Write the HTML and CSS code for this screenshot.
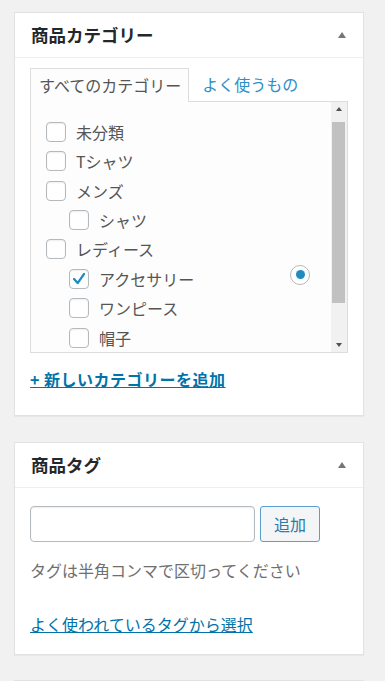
FILE: index.html
```html
<!DOCTYPE html>
<html lang="ja">
<head>
<meta charset="utf-8">
<title>商品カテゴリー</title>
<link rel="stylesheet" href="styles.css">
</head>
<body>
<div class="wrap">
  <section class="postbox">
    <div class="postbox-header">
      <h2>商品カテゴリー</h2>
      <span class="toggle"></span>
    </div>
    <div class="inside">
      <ul class="tabs">
        <li class="tab active">すべてのカテゴリー</li>
        <li class="tab">よく使うもの</li>
      </ul>
      <div class="tab-panel">
        <ul class="checklist">
          <li class="row"><span class="cb"></span><span>未分類</span></li>
          <li class="row"><span class="cb"></span><span>Tシャツ</span></li>
          <li class="row"><span class="cb"></span><span>メンズ</span></li>
          <li class="row child"><span class="cb"></span><span>シャツ</span></li>
          <li class="row"><span class="cb"></span><span>レディース</span></li>
          <li class="row child"><span class="cb checked"><svg viewBox="0 0 20 20" width="18" height="18"><polyline points="4.5,10 8.5,14.5 15.5,4.5" fill="none" stroke="#1e8cbe" stroke-width="2.6" stroke-linecap="round" stroke-linejoin="round"/></svg></span><span>アクセサリー</span><span class="radio"><span class="dot"></span></span></li>
          <li class="row child"><span class="cb"></span><span>ワンピース</span></li>
          <li class="row child"><span class="cb"></span><span>帽子</span></li>
        </ul>
        <div class="scrollbar">
          <span class="sb-btn"><span class="arr up"></span></span>
          <span class="thumb"></span>
          <span class="sb-fill"></span>
          <span class="sb-btn"><span class="arr down"></span></span>
        </div>
      </div>
      <a class="add-link" href="#">+ 新しいカテゴリーを追加</a>
    </div>
  </section>

  <section class="postbox">
    <div class="postbox-header">
      <h2>商品タグ</h2>
      <span class="toggle"></span>
    </div>
    <div class="inside tag-inside">
      <div class="tag-form">
        <input class="tag-input" type="text">
        <button class="tag-btn" type="button">追加</button>
      </div>
      <p class="howto">タグは半角コンマで区切ってください</p>
      <a class="tag-link" href="#">よく使われているタグから選択</a>
    </div>
  </section>

  <section class="postbox last"></section>
</div>
</body>
</html>
```

FILE: styles.css
```css
* { box-sizing: border-box; }

body {
  margin: 0;
  background: #f1f1f1;
  font-family: "Noto Sans CJK JP", "Noto Sans", sans-serif;
  color: #555;
  overflow: hidden;
}

.wrap {
  padding: 12px 21px 0 14px;
}

.postbox {
  background: #fff;
  border: 1px solid #e2e2e2;
  box-shadow: 0 1px 1px rgba(0, 0, 0, 0.04);
}

.postbox + .postbox {
  margin-top: 26px;
}

.postbox.last {
  margin-top: 25px;
  height: 1px;
  border-bottom: none;
  box-shadow: none;
}

.postbox-header {
  height: 45px;
  border-bottom: 1px solid #eee;
  display: flex;
  align-items: center;
  justify-content: space-between;
  padding: 0 17px 0 16px;
}

.postbox-header h2 {
  margin: 0;
  font-size: 17.5px;
  font-weight: 700;
  color: #23282d;
  line-height: 1;
}

.toggle {
  width: 0;
  height: 0;
  border-left: 4px solid transparent;
  border-right: 4px solid transparent;
  border-bottom: 6px solid #72777c;
}

.inside {
  padding: 10px 15px 24px 15px;
}

.tabs {
  list-style: none;
  margin: 0 0 -1px 0;
  padding: 0;
  display: flex;
}

.tab {
  height: 34px;
  line-height: 32px;
  font-size: 16px;
  padding: 0 12px 0 13px;
  color: #2f8fc7;
}

.tab.active {
  padding: 0 7px 0 8px;
  border: 1px solid #ddd;
  border-bottom: none;
  background: #fdfdfd;
  color: #555;
  position: relative;
  z-index: 1;
}

.tab-panel {
  display: flex;
  height: 252px;
  border: 1px solid #ddd;
  background: #fdfdfd;
  width: 318px;
}

.checklist {
  flex: 1;
  list-style: none;
  margin: 0;
  padding: 15px 0 0 15px;
  overflow: hidden;
}

.row {
  display: flex;
  align-items: center;
  height: 29.45px;
  font-size: 16px;
  color: #555;
}

.row.child {
  padding-left: 23px;
}

.cb {
  width: 20px;
  height: 20px;
  border: 1px solid #b4b9be;
  border-radius: 4px;
  background: #fff;
  margin-right: 10px;
  flex: none;
  display: flex;
  align-items: center;
  justify-content: center;
  box-shadow: inset 0 1px 2px rgba(0, 0, 0, 0.07);
}

.radio {
  margin-left: auto;
  margin-right: 21px;
  margin-bottom: 8px;
  width: 20px;
  height: 20px;
  border: 1px solid #b4b9be;
  border-radius: 50%;
  background: #fff;
  display: flex;
  align-items: center;
  justify-content: center;
}

.dot {
  width: 9px;
  height: 9px;
  border-radius: 50%;
  background: #1e8cbe;
}

.scrollbar {
  width: 16px;
  flex: none;
  background: #f1f1f1;
  display: flex;
  flex-direction: column;
}

.sb-btn {
  height: 16px;
  display: flex;
  align-items: center;
  justify-content: center;
}

.arr {
  width: 0;
  height: 0;
  border-left: 3.5px solid transparent;
  border-right: 3.5px solid transparent;
}

.arr.up {
  border-bottom: 4px solid #505050;
  margin-top: -2px;
}

.arr.down {
  border-top: 4px solid #505050;
  margin-top: 2px;
}

.thumb {
  height: 181px;
  margin: 4px 2px 0 1px;
  background: #c1c1c1;
}

.sb-fill {
  flex: 1;
}

.add-link {
  display: inline-block;
  margin-top: 14px;
  font-size: 16px;
  line-height: 24px;
  font-weight: 700;
  letter-spacing: 0.5px;
  color: #0073aa;
  text-decoration: underline;
}

.tag-inside {
  padding: 18px 15px 18px 15px;
}

.tag-form {
  display: flex;
  gap: 5px;
}

.tag-input {
  width: 225px;
  height: 36px;
  border: 1px solid #b4b9be;
  border-radius: 4px;
  background: #fff;
  margin: 0;
  box-shadow: inset 0 1px 2px rgba(0, 0, 0, 0.07);
}

.tag-btn {
  width: 60px;
  height: 36px;
  margin: 0;
  border: 1px solid #5a9ecb;
  border-radius: 3px;
  background: #f3f5f6;
  color: #2a7aab;
  font-family: "Noto Sans CJK JP", "Noto Sans", sans-serif;
  font-size: 16px;
  padding: 0;
}

.howto {
  margin: 16px 0 0 0;
  font-size: 16px;
  line-height: 24px;
  color: #6f6f6f;
}

.tag-link {
  display: inline-block;
  margin-top: 30px;
  font-size: 16px;
  line-height: 24px;
  color: #0073aa;
  text-decoration: underline;
}
```
